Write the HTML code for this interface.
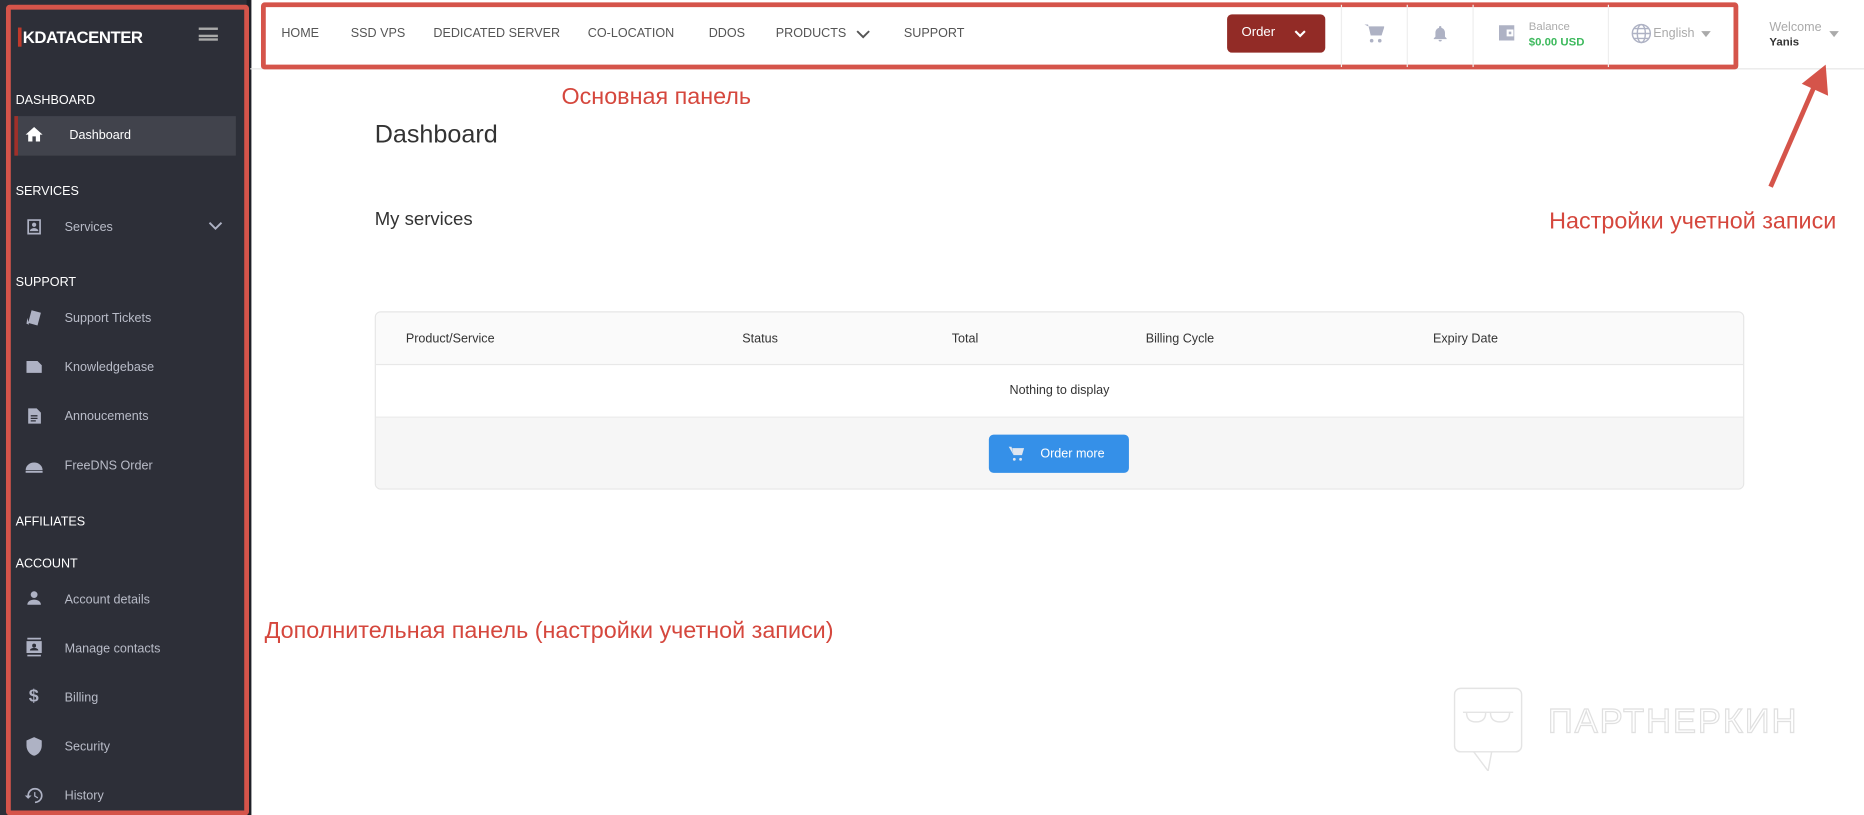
<!DOCTYPE html>
<html><head><meta charset="utf-8"><style>
*{margin:0;padding:0;box-sizing:border-box}
html,body{width:1864px;height:815px;overflow:hidden;background:#fff;font-family:"Liberation Sans","Noto Sans CJK SC",sans-serif}
#s{position:absolute;left:0;top:0;width:1557px;height:681px;transform:scale(1.19717);transform-origin:0 0}
.a{position:absolute}
.sb{left:0;top:0;width:209px;height:681px;background:#2d2f38}
.sbb{left:5px;top:4px;width:203px;height:677px;border:4px solid #d5544a;border-radius:3px}
.h{color:#fff;font-size:10.5px;left:13px}
.it{color:#b9bcc8;font-size:10.5px;left:54px}
.ic{left:20px;width:17px;height:17px;fill:#aeb2c4}
.nav{font-size:10.5px;color:#555;top:22px}
.red{color:#d5473d;font-size:19.5px}
</style></head><body><div id="s">
<div class="a sb"></div>
<div class="a" style="left:206px;top:0;width:4px;height:681px;background:#1f2027"></div>
<div class="a sbb"></div>
<div class="a" style="left:15px;top:23px;color:#fff;font-weight:bold;font-size:14px;letter-spacing:-0.4px"><span style="border-left:3px solid #c0392b;padding-left:1px">K</span>DATACENTER</div>
<div class="a" style="left:166px;top:23px;width:16px;height:11px;border-top:2px solid #aaa;border-bottom:2px solid #aaa"><div style="margin-top:3.5px;height:0;border-top:2px solid #aaa"></div></div>
<div class="a h" style="top:78px">DASHBOARD</div>
<div class="a" style="left:12px;top:97px;width:185px;height:33px;background:#41434c;border-left:3px solid #a0302a"></div>
<svg class="a ic" style="top:104px;fill:#fff" viewBox="0 0 24 24"><path d="M10 20v-6h4v6h5v-8h3L12 3 2 12h3v8z"/></svg>
<div class="a" style="left:58px;top:107px;color:#fff;font-size:10.5px">Dashboard</div>
<div class="a h" style="top:154px">SERVICES</div>
<svg class="a ic" style="top:181px" viewBox="0 0 24 24"><path d="M4 3h16v18H4z M6 5v14h12V5z M12 7a2.5 2.5 0 110 5 2.5 2.5 0 010-5zM7 17c0-2.5 3-3.5 5-3.5s5 1 5 3.5z"/></svg>
<div class="a it" style="top:184px">Services</div>
<svg class="a" style="left:174px;top:184px" width="12" height="10" viewBox="0 0 12 10"><path d="M1 2l5 5 5-5" stroke="#aeb2c4" stroke-width="1.6" fill="none"/></svg>
<div class="a h" style="top:230px">SUPPORT</div>
<svg class="a ic" style="top:257px" viewBox="0 0 24 24"><path d="M9 3l11 3-4 15-11-3z M4 12l2 8-3-1z"/></svg>
<div class="a it" style="top:260px">Support Tickets</div>
<svg class="a ic" style="top:298px" viewBox="0 0 24 24"><path d="M3 5h13l5 5v9H3z"/></svg>
<div class="a it" style="top:301px">Knowledgebase</div>
<svg class="a ic" style="top:339px" viewBox="0 0 24 24"><path d="M5 3h10l5 5v13H5z M8 11v1.5h8V11z M8 14v1.5h8V14z M8 17v1.5h6V17z" fill-rule="evenodd"/></svg>
<div class="a it" style="top:342px">Annoucements</div>
<svg class="a ic" style="top:380px" viewBox="0 0 24 24"><path d="M2 18a10 9 0 0120 0z M2 19h20v2H2z"/></svg>
<div class="a it" style="top:383px">FreeDNS Order</div>
<div class="a h" style="top:430px">AFFILIATES</div>
<div class="a h" style="top:465px">ACCOUNT</div>
<svg class="a ic" style="top:491px" viewBox="0 0 24 24"><circle cx="12" cy="8" r="4"/><path d="M4 20c0-4 4-6 8-6s8 2 8 6z"/></svg>
<div class="a it" style="top:495px">Account details</div>
<svg class="a ic" style="top:532px" viewBox="0 0 24 24"><path d="M4 1h16v2H4zM4 21h16v2H4zM3 5h18v14H3z M12 8a2.3 2.3 0 110 4.6 2.3 2.3 0 010-4.6zM7 16c0-2 3-3 5-3s5 1 5 3z" fill-rule="evenodd"/></svg>
<div class="a it" style="top:536px">Manage contacts</div>
<div class="a" style="left:24px;top:573px;color:#aeb2c4;font-size:15px;font-weight:bold">$</div>
<div class="a it" style="top:577px">Billing</div>
<svg class="a ic" style="top:615px" viewBox="0 0 24 24"><path d="M12 1L3 5v6c0 5.5 3.8 10.7 9 12 5.2-1.3 9-6.5 9-12V5z"/></svg>
<div class="a it" style="top:618px">Security</div>
<svg class="a ic" style="top:656px" viewBox="0 0 24 24"><path d="M13 3a9 9 0 00-9 9H1l4 4 4-4H6a7 7 0 117 7v2a9 9 0 000-18zm-1 5v5l4 2.5.8-1.3-3.3-2V8z"/></svg>
<div class="a it" style="top:659px">History</div>

<div class="a" style="left:209px;top:57px;width:1348px;height:1px;background:#e6e6e6"></div>
<div class="a" style="left:218px;top:2px;width:1234px;height:56px;border:4px solid #d5544a;border-radius:3px"></div>
<div class="a nav" style="left:235px">HOME</div>
<div class="a nav" style="left:293px">SSD VPS</div>
<div class="a nav" style="left:362px">DEDICATED SERVER</div>
<div class="a nav" style="left:491px">CO-LOCATION</div>
<div class="a nav" style="left:592px">DDOS</div>
<div class="a nav" style="left:648px">PRODUCTS</div>
<svg class="a" style="left:715px;top:24px" width="12" height="10" viewBox="0 0 12 10"><path d="M1 2l5 5 5-5" stroke="#555" stroke-width="1.6" fill="none"/></svg>
<div class="a nav" style="left:755px">SUPPORT</div>
<div class="a" style="left:1025px;top:12px;width:82px;height:32px;background:#922b26;border-radius:4px;color:#fff;font-size:11px;padding:9px 0 0 12px">Order</div>
<svg class="a" style="left:1081px;top:24px" width="10" height="8" viewBox="0 0 10 8"><path d="M1 2l4 4 4-4" stroke="#fff" stroke-width="1.8" fill="none"/></svg>
<div class="a" style="left:1120px;top:4px;width:1px;height:52px;background:#eee"></div>
<div class="a" style="left:1175px;top:4px;width:1px;height:52px;background:#eee"></div>
<div class="a" style="left:1230px;top:4px;width:1px;height:52px;background:#eee"></div>
<div class="a" style="left:1343px;top:4px;width:1px;height:52px;background:#eee"></div>
<svg class="a" style="left:1139px;top:19px" width="18" height="18" viewBox="0 0 24 24" fill="#aeb2c4"><path d="M1 2h4l3 12h12l3-9H7"/><path d="M6 4h17l-3 10H8z"/><circle cx="9" cy="20" r="2"/><circle cx="18" cy="20" r="2"/></svg>
<svg class="a" style="left:1195px;top:19px" width="16" height="18" viewBox="0 0 24 24" fill="#aeb2c4"><path d="M12 22a2 2 0 002-2h-4a2 2 0 002 2zm6-6V11c0-3-2-5.5-4.5-6V4a1.5 1.5 0 00-3 0v1C8 5.5 6 8 6 11v5l-2 2v1h16v-1z"/></svg>
<svg class="a" style="left:1250px;top:19px" width="17" height="17" viewBox="0 0 24 24" fill="#aeb2c4"><path d="M3 3h18v18H3z M12 8v8h8V8z M14.5 10.5h3v3h-3z" fill-rule="evenodd"/></svg>
<div class="a" style="left:1277px;top:17px;font-size:9.5px;color:#aaa">Balance</div>
<div class="a" style="left:1277px;top:30px;font-size:9.5px;color:#3cb95c;font-weight:bold">$0.00 USD</div>
<svg class="a" style="left:1362px;top:19px" width="18" height="18" viewBox="0 0 24 24" fill="none" stroke="#aeb2c4" stroke-width="1.6"><circle cx="12" cy="12" r="10"/><ellipse cx="12" cy="12" rx="4.5" ry="10"/><path d="M2 12h20M4 6.5h16M4 17.5h16"/></svg>
<div class="a" style="left:1381px;top:22px;font-size:10.5px;color:#aaa">English</div>
<div class="a" style="left:1421px;top:26px;border:4px solid transparent;border-top:5px solid #aaa"></div>
<div class="a" style="left:1478px;top:17px;font-size:10.5px;color:#aaa">Welcome</div>
<div class="a" style="left:1478px;top:30px;font-size:9.5px;color:#333;font-weight:bold">Yanis</div>
<div class="a" style="left:1528px;top:26px;border:4px solid transparent;border-top:5px solid #aaa"></div>

<div class="a red" style="left:469px;top:70px">Основная панель</div>
<div class="a red" style="left:1294px;top:174px">Настройки учетной записи</div>
<div class="a red" style="left:221px;top:516px">Дополнительная панель (настройки учетной записи)</div>
<svg class="a" style="left:1470px;top:50px" width="60" height="112" viewBox="0 0 60 112"><path d="M9 106L49 14" stroke="#d5544a" stroke-width="4"/><path d="M55 4l2 26-22-10z" fill="#d5544a"/></svg>

<div class="a" style="left:313px;top:101px;font-size:21px;color:#333">Dashboard</div>
<div class="a" style="left:313px;top:175px;font-size:15.5px;color:#333">My services</div>
<div class="a" style="left:313px;top:260px;width:1144px;height:149px;border:1px solid #e6e6e6;border-radius:5px;overflow:hidden;background:#fff">
<div style="height:44px;background:#fafafa;border-bottom:1px solid #e8e8e8;font-size:10.5px;color:#333;position:relative">
<span class="a" style="left:25px;top:16px">Product/Service</span><span class="a" style="left:306px;top:16px">Status</span><span class="a" style="left:481px;top:16px">Total</span><span class="a" style="left:643px;top:16px">Billing Cycle</span><span class="a" style="left:883px;top:16px">Expiry Date</span></div>
<div style="height:44px;border-bottom:1px solid #e8e8e8;font-size:10.5px;color:#333;text-align:center;padding-top:15px">Nothing to display</div>
<div style="height:60px;background:#f6f6f6;position:relative">
<div class="a" style="left:512px;top:14px;width:117px;height:32px;background:#3590e8;border-radius:4px;color:#fff;font-size:10.5px;padding:10px 0 0 43px">Order more</div>
<svg class="a" style="left:528px;top:23px" width="14" height="14" viewBox="0 0 24 24" fill="#dfe6f0"><path d="M6 4h17l-3 10H8zM1 2h4l3 12"/><circle cx="9" cy="20" r="2"/><circle cx="18" cy="20" r="2"/></svg>
</div></div>

<svg class="a" style="left:1213px;top:572px" width="320" height="72" viewBox="0 0 320 72" fill="none" stroke="#e4e4e4" stroke-width="1.2"><rect x="2" y="3" width="56" height="53" rx="5"/><path d="M18 56l12 16 3-16"/><path d="M9 23h42M12 23q0 8 8 8t8-8M32 23q0 8 8 8t8-8"/>
<text x="80" y="40" font-family="Liberation Sans, sans-serif" font-size="29" fill="none" stroke="#e0e0e0" stroke-width="1" letter-spacing="1.5">ПАРТНЕРКИН</text></svg>
</div></body></html>
